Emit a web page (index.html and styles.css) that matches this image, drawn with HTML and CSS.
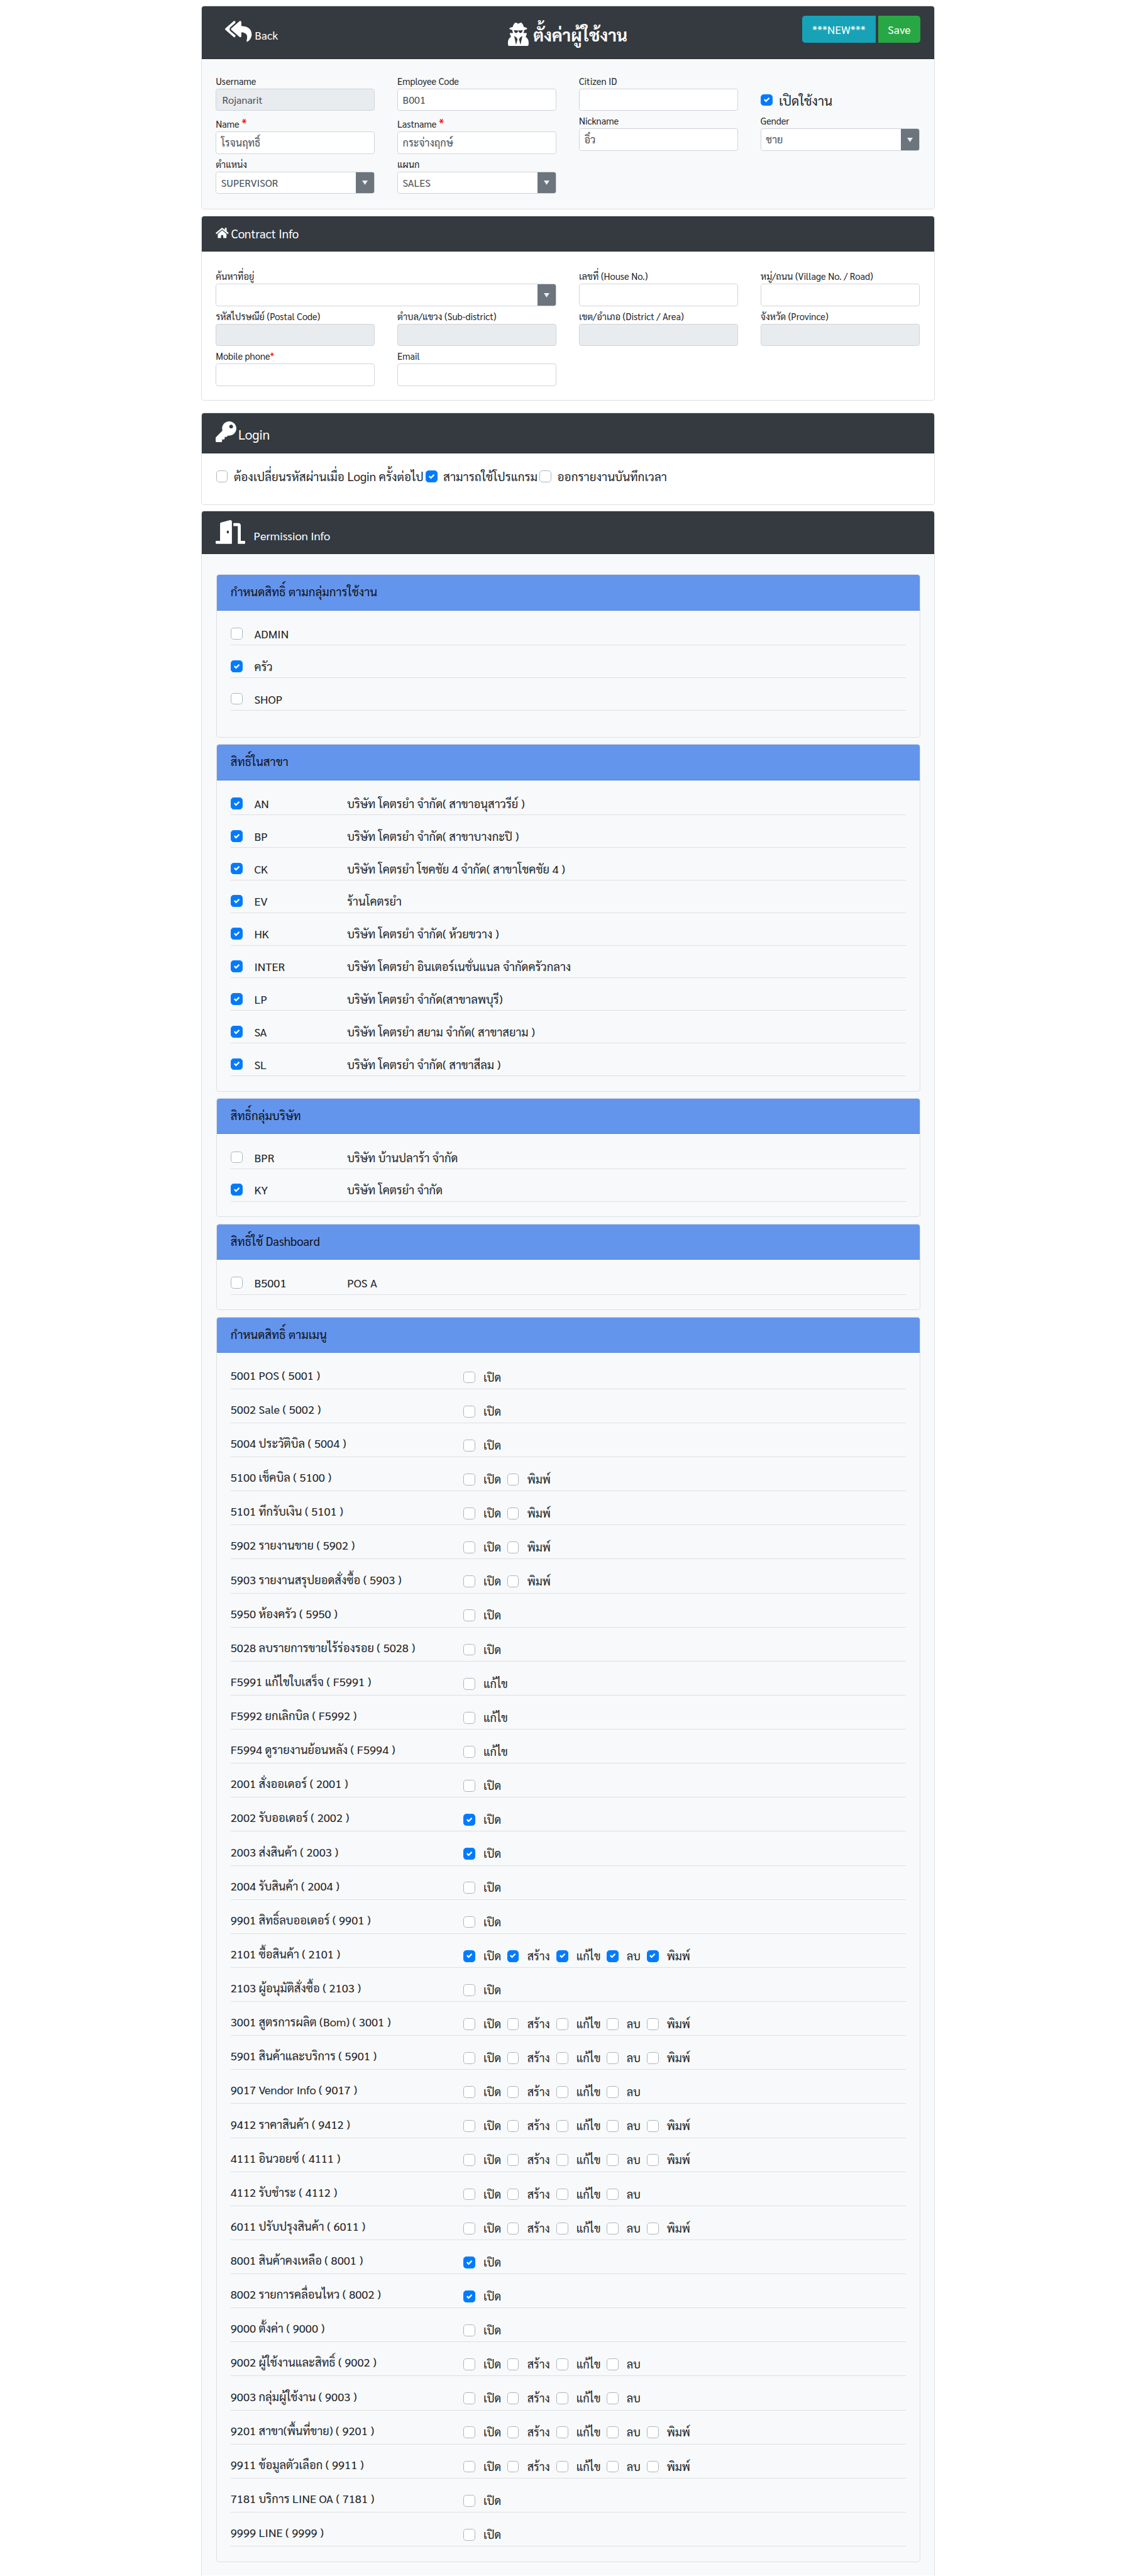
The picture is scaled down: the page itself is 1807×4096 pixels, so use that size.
FILE: index.html
```html
<!DOCTYPE html>
<html lang="th">
<head>
<meta charset="utf-8">
<title>ตั้งค่าผู้ใช้งาน</title>
<link rel="stylesheet" href="styles.css">
</head>
<body>
<main class="page">
  <section class="card card-user">
    <header class="card-head head-user">
      <a class="back"><svg class="i-reply" viewBox="0 0 576 512"><path d="M136.309 189.836L312.313 37.851C327.72 24.546 352 35.348 352 56.015v82.763c129.182 10.231 224 52.212 224 183.548 0 61.441-39.582 122.309-83.333 154.132-13.653 9.931-33.111-2.533-28.077-18.631 38.512-123.162-3.922-169.482-112.59-182.015v84.175c0 20.701-24.3 31.453-39.687 18.164L136.309 226.164c-11.071-9.561-11.086-26.753 0-36.328zm-128 36.328L184.313 378.15C199.7 391.439 224 380.687 224 359.986v-15.818l-108.606-93.785A55.96 55.96 0 0 1 96 207.998a55.953 55.953 0 0 1 19.393-42.38L224 71.832V56.015c0-20.667-24.28-31.469-39.687-18.164L8.309 189.836c-11.086 9.575-11.071 26.767 0 36.328z"/></svg><span>Back</span></a>
      <h1 class="title"><svg class="i-secret" viewBox="0 0 448 512"><path d="M383.9 308.3l23.9-62.6c4-10.5-3.7-21.7-15-21.7h-58.5c11-18.9 17.8-40.6 17.8-64v-.3c39.2-7.8 64-19.1 64-31.7 0-13.3-27.3-25.1-70.1-33-9.2-32.8-27-65.8-40.6-82.8-9.5-11.9-25.9-15.6-39.5-8.8l-27.6 13.8c-9 4.5-19.6 4.5-28.6 0L182.1 3.4c-13.6-6.8-30-3.1-39.5 8.8-13.5 17-31.4 50-40.6 82.8-42.7 7.9-70 19.7-70 33 0 12.6 24.8 23.9 64 31.7v.3c0 23.4 6.8 45.1 17.8 64H56.3c-11.5 0-19.2 11.7-14.7 22.3l25.8 60.2C27.3 329.8 0 372.7 0 422.4v44.8C0 491.9 20.1 512 44.8 512h358.4c24.7 0 44.8-20.1 44.8-44.8v-44.8c0-48.4-25.8-90.4-64.1-114.1zM176 480l-41.6-192 49.6 32 24 40-32 120zm96 0l-32-120 24-40 49.6-32L272 480zm41.7-298.5c-3.9 11.9-7 24.6-16.5 33.4-10.1 9.3-48 22.4-64-25-2.8-8.4-15.4-8.4-18.3 0-17 50.2-56 32.4-64 25-9.5-8.8-12.7-21.5-16.5-33.4-.8-2.5-6.3-5.7-6.3-5.8v-10.8c28.3 3.6 61 5.8 96 5.8s67.7-2.1 96-5.8v10.8c-.1.1-5.6 3.2-6.4 5.8z"/></svg><span>ตั้งค่าผู้ใช้งาน</span></h1>
      <div class="buttons"><button class="btn btn-new"><span>***NEW***</span></button><button class="btn btn-save"><span>Save</span></button></div>
    </header>
    <div class="form">
      <div class="field"><label>Username</label><div class="input off pad">Rojanarit</div></div>
      <div class="field"><label>Employee Code</label><div class="input">B001</div></div>
      <div class="field"><label>Citizen ID</label><div class="input"></div></div>
      <div class="active"><i class="cb on"></i><span>เปิดใช้งาน</span></div>
      <div class="field"><label class="req">Name <b>*</b></label><div class="input">โรจนฤทธิ์</div></div>
      <div class="field"><label class="req">Lastname <b>*</b></label><div class="input">กระจ่างฤกษ์</div></div>
      <div class="field"><label>Nickname</label><div class="input">อิ๋ว</div></div>
      <div class="field"><label>Gender</label><div class="input select">ชาย</div></div>
      <div class="field"><label>ตำแหน่ง</label><div class="input select">SUPERVISOR</div></div>
      <div class="field"><label>แผนก</label><div class="input select">SALES</div></div>
    </div>
  </section>

  <section class="card card-contract">
    <header class="card-head head-contract"><svg class="i-home" viewBox="0 0 576 512"><path d="M280.37 148.26L96 300.11V464a16 16 0 0 0 16 16l112.06-.29a16 16 0 0 0 15.92-16V368a16 16 0 0 1 16-16h64a16 16 0 0 1 16 16v95.64a16 16 0 0 0 16 16.05L464 480a16 16 0 0 0 16-16V300L295.67 148.26a12.19 12.19 0 0 0-15.3 0zM571.6 251.47L488 182.56V44.05a12 12 0 0 0-12-12h-56a12 12 0 0 0-12 12v72.61L318.47 43a48 48 0 0 0-61 0L4.34 251.47a12 12 0 0 0-1.6 16.9l25.5 31A12 12 0 0 0 45.15 301l235.22-193.74a12.19 12.19 0 0 1 15.3 0L530.9 301a12 12 0 0 0 16.9-1.6l25.5-31a12 12 0 0 0-1.7-16.93z"/></svg><span>Contract Info</span></header>
    <div class="form form-contract">
      <div class="field wide"><label>ค้นหาที่อยู่</label><div class="input select"></div></div>
      <div class="field"><label>เลขที่ (House No.)</label><div class="input"></div></div>
      <div class="field"><label>หมู่/ถนน (Village No. / Road)</label><div class="input"></div></div>
      <div class="field"><label>รหัสไปรษณีย์ (Postal Code)</label><div class="input off"></div></div>
      <div class="field"><label>ตำบล/แขวง (Sub-district)</label><div class="input off"></div></div>
      <div class="field"><label>เขต/อำเภอ (District / Area)</label><div class="input off"></div></div>
      <div class="field"><label>จังหวัด (Province)</label><div class="input off"></div></div>
      <div class="field"><label>Mobile phone<b>*</b></label><div class="input"></div></div>
      <div class="field"><label>Email</label><div class="input"></div></div>
    </div>
  </section>

  <section class="card card-login">
    <header class="card-head head-login"><svg class="i-key" viewBox="0 0 512 512"><path d="M512 176.001C512 273.203 433.202 352 336 352c-11.22 0-22.19-1.062-32.827-3.069l-24.012 27.014A23.999 23.999 0 0 1 261.223 384H224v40c0 13.255-10.745 24-24 24h-40v40c0 13.255-10.745 24-24 24H24c-13.255 0-24-10.745-24-24v-78.059c0-6.365 2.529-12.47 7.029-16.971l161.802-161.802C163.108 213.814 160 195.271 160 176 160 78.798 238.797.001 335.999 0 433.488-.001 512 78.511 512 176.001zM336 128c0 26.51 21.49 48 48 48s48-21.49 48-48-21.49-48-48-48-48 21.49-48 48z"/></svg><span>Login</span></header>
    <div class="checks">
      <i class="cb"></i><span class="c1">ต้องเปลี่ยนรหัสผ่านเมื่อ Login ครั้งต่อไป</span>
      <i class="cb on"></i><span class="c2">สามารถใช้โปรแกรม</span>
      <i class="cb"></i><span class="c3">ออกรายงานบันทึกเวลา</span>
    </div>
  </section>

  <section class="card card-perm">
    <header class="card-head head-perm"><svg class="i-door" viewBox="0 0 640 512"><path d="M624 448h-80V113.45C544 86.19 522.47 64 496 64H384v64h96v384h144c8.84 0 16-7.16 16-16v-32c0-8.84-7.16-16-16-16zM312.24 1.01l-192 49.74C105.99 54.44 96 67.7 96 82.92V448H16c-8.84 0-16 7.16-16 16v32c0 8.84 7.16 16 16 16h336V33.18c0-21.58-19.56-37.41-39.76-32.17zM264 288c-13.25 0-24-14.33-24-32s10.75-32 24-32 24 14.33 24 32-10.75 32-24 32z"/></svg><span>Permission Info</span></header>
    <div class="groups">
      <section class="group g-role"><h2>กำหนดสิทธิ์ ตามกลุ่มการใช้งาน</h2><div class="rows" data-list="roles"></div></section>
      <section class="group"><h2>สิทธิ์ในสาขา</h2><div class="rows" data-list="branches"></div></section>
      <section class="group"><h2>สิทธิ์กลุ่มบริษัท</h2><div class="rows" data-list="companies"></div></section>
      <section class="group"><h2>สิทธิ์ใช้ Dashboard</h2><div class="rows" data-list="dashboards"></div></section>
      <section class="group"><h2>กำหนดสิทธิ์ ตามเมนู</h2><div class="rows menu-rows" data-list="menus"></div></section>
    </div>
  </section>
</main>
<script src="script.js"></script>
</body>
</html>
```
FILE: styles.css
```css
/* 1rem = 9.41px, every length is in tenths of it */
* { box-sizing: border-box; }
html { background: #fff; font-size: 9.41px; }
body {
  margin: 0;
  font-family: "Sarabun", "Noto Sans Thai", "Noto Sans", sans-serif;
  font-size: 1.95rem;
  color: #212529;
}
.page { width: 124.1rem; height: 435.2rem; margin: 0 auto; padding-top: 1rem; display: flex; flex-direction: column; }
.card { flex: none; border: 1px solid #dcdfe1; border-radius: .5rem; background: #fff; overflow: hidden; }
.card-head { background: #343a40; color: #fff; border-bottom: 1px solid #2b2f34; display: flex; padding-left: 2.4rem; }
.card-head svg, .title svg { fill: #fff; display: block; flex: none; }
.card-user { height: 34.4rem; background: #f8f9fa; }
.card-contract { height: 31.3rem; margin-top: 1rem; }
.card-login { height: 15.6rem; margin-top: 2rem; }
.card-perm { flex: 1 1 0; min-height: 0; margin-top: 1rem; background: #f8f9fa; border-bottom: 0; border-radius: .5rem .5rem 0 0; }

.head-user { height: 8.9rem; padding: 1.5rem 2.4rem 0 4rem; justify-content: space-between; }
.back { display: flex; gap: .5rem; width: 26.6rem; line-height: 3rem; padding-top: .7rem; }
.back span { margin-top: 1.2rem; font-size: 1.9rem; }
.i-reply { width: 4.5rem; height: 4rem; }
.title { margin: 0; display: flex; gap: .7rem; font-size: 2.84rem; line-height: 4rem; font-weight: 700; padding-top: 1.2rem; }
.i-secret { width: 3.7rem; height: 4rem; }
.buttons { display: flex; gap: .4rem; width: 28.4rem; justify-content: flex-end; }
.btn { height: 4.6rem; border: 0; padding: 0; color: #fff; font: inherit; font-size: 1.9rem; line-height: 4.6rem; }
.btn-new { width: 12.5rem; background: #17a2b8; border-radius: .5rem 0 0 .5rem; }
.btn-save { width: 7.1rem; background: #28a745; border-radius: 0 .5rem .5rem 0; }

.form { display: grid; grid-template-columns: repeat(4, 26.9rem); column-gap: 3.8rem; row-gap: .75rem; padding: 2.7rem 2.4rem 0; align-items: start; }
.form-contract { padding-top: 3.2rem; }
.field { display: flex; flex-direction: column; }
.wide { grid-column: span 2; }
.field label { height: 2.25rem; line-height: 2rem; font-size: 1.56rem; white-space: nowrap; }
.field label b { color: #f00; font-weight: 400; }
.field label.req { height: 2.8rem; line-height: 2.9rem; }
.req b { font-size: 2rem; line-height: 1; }
.input { height: 3.75rem; border: 1px solid #ced4da; border-radius: .4rem; background: #fff; color: #495057; font-size: 1.73rem; line-height: 3.6rem; padding-left: .8rem; white-space: nowrap; }
.off { background: #e9ecef; }
.pad { padding-left: 1rem; }
.select { display: flex; justify-content: space-between; overflow: hidden; }
.select::after {
  content: "";
  margin-left: auto;
  width: 3.1rem;
  background: #6c757d url("data:image/svg+xml,%3Csvg xmlns='http://www.w3.org/2000/svg' viewBox='0 0 10 7'%3E%3Cpath fill='%23eee' d='M0 0h10L5 7z'/%3E%3C/svg%3E") center / 1rem .7rem no-repeat;
}
.active { display: flex; gap: 1.1rem; padding-top: 3.2rem; font-size: 2.2rem; line-height: 2.2rem; }

.cb { display: block; flex: none; width: 2rem; height: 2rem; border: 1px solid #adb5bd; border-radius: .5rem; background: #fff; }
.cb.on { border-color: #007bff; background: #007bff; }
.cb svg { display: block; width: 1rem; height: 1rem; margin: .4rem; }

.head-contract { height: 6rem; gap: .4rem; line-height: 5.8rem; font-size: 2rem; }
.i-home { width: 2.2rem; height: 2rem; margin-top: 1.9rem; }
.head-login { height: 6.8rem; gap: .3rem; line-height: 7.3rem; font-size: 2.2rem; }
.i-key { width: 3.5rem; height: 3.5rem; margin-top: 1.4rem; }
.head-perm { height: 7.2rem; gap: 1.4rem; line-height: 8.2rem; }
.i-door { width: 5rem; height: 4rem; margin-top: 1.5rem; }
.checks { display: flex; padding: 2.9rem 0 0 2.45rem; font-size: 2rem; line-height: 2rem; white-space: nowrap; }
.checks span { margin-left: 1rem; }
.c1 { width: 32.4rem; }
.c2 { width: 16.3rem; }

.groups { padding: 3.45rem 2.4rem 0 2.45rem; display: flex; flex-direction: column; gap: 1.1rem; }
.group { border: 1px solid #dcdfe1; border-radius: .5rem; overflow: hidden; }
.group h2 { margin: 0; height: 6rem; background: #6495ed; border-bottom: 1px solid #5080d8; color: #111; font-size: 1.98rem; font-weight: 400; line-height: 5.6rem; padding-left: 2.35rem; }
.rows { padding: .4rem 2.3rem 2.5rem 2.35rem; }
.g-role .rows { padding-bottom: 4.45rem; }
.row { height: 5.51rem; border-bottom: 1px solid #dcdfe1; display: flex; padding-top: 2.5rem; line-height: 2rem; white-space: nowrap; }
.code { width: 15.7rem; margin-left: 2rem; }
.menu-rows .row { height: 5.753rem; padding-top: 2.35rem; }
.name { width: 39.35rem; }
.option { display: flex; padding-top: .4rem; font-size: 1.92rem; }
.option span { margin-left: 1.4rem; }
.o0 { width: 7.4rem; }
.o1 { width: 8.3rem; }
.o2 { width: 8.5rem; }
.o3 { width: 6.8rem; }
```
FILE: script.js
```js
const lists = {
  roles: [["ADMIN", "", 0], ["ครัว", "", 1], ["SHOP", "", 0]],
  branches: [
    ["AN", "บริษัท โคตรยำ จำกัด( สาขาอนุสาวรีย์ )", 1],
    ["BP", "บริษัท โคตรยำ จำกัด( สาขาบางกะปิ )", 1],
    ["CK", "บริษัท โคตรยำ โชคชัย 4 จำกัด( สาขาโชคชัย 4 )", 1],
    ["EV", "ร้านโคตรยำ", 1],
    ["HK", "บริษัท โคตรยำ จำกัด( ห้วยขวาง )", 1],
    ["INTER", "บริษัท โคตรยำ อินเตอร์เนชั่นแนล จำกัดครัวกลาง", 1],
    ["LP", "บริษัท โคตรยำ จำกัด(สาขาลพบุรี)", 1],
    ["SA", "บริษัท โคตรยำ สยาม จำกัด( สาขาสยาม )", 1],
    ["SL", "บริษัท โคตรยำ จำกัด( สาขาสีลม )", 1]
  ],
  companies: [["BPR", "บริษัท บ้านปลาร้า จำกัด", 0], ["KY", "บริษัท โคตรยำ จำกัด", 1]],
  dashboards: [["B5001", "POS A", 0]]
};
const optionNames = ["เปิด", "สร้าง", "แก้ไข", "ลบ", "พิมพ์"];
// [code, name, option indexes, checked]
const menus = [
  ["5001", "POS", "0"], ["5002", "Sale", "0"], ["5004", "ประวัติบิล", "0"],
  ["5100", "เช็คบิล", "04"], ["5101", "ทึกรับเงิน", "04"], ["5902", "รายงานขาย", "04"],
  ["5903", "รายงานสรุปยอดสั่งซื้อ", "04"], ["5950", "ห้องครัว", "0"],
  ["5028", "ลบรายการขายไร้ร่องรอย", "0"], ["F5991", "แก้ไขใบเสร็จ", "2"],
  ["F5992", "ยกเลิกบิล", "2"], ["F5994", "ดูรายงานย้อนหลัง", "2"],
  ["2001", "สั่งออเดอร์", "0"], ["2002", "รับออเดอร์", "0", 1], ["2003", "ส่งสินค้า", "0", 1],
  ["2004", "รับสินค้า", "0"], ["9901", "สิทธิ์ลบออเดอร์", "0"],
  ["2101", "ซื้อสินค้า", "01234", 1], ["2103", "ผู้อนุมัติสั่งซื้อ", "0"],
  ["3001", "สูตรการผลิต (Bom)", "01234"], ["5901", "สินค้าและบริการ", "01234"],
  ["9017", "Vendor Info", "0123"], ["9412", "ราคาสินค้า", "01234"],
  ["4111", "อินวอยซ์", "01234"], ["4112", "รับชำระ", "0123"],
  ["6011", "ปรับปรุงสินค้า", "01234"], ["8001", "สินค้าคงเหลือ", "0", 1],
  ["8002", "รายการคลื่อนไหว", "0", 1], ["9000", "ตั้งค่า", "0"],
  ["9002", "ผู้ใช้งานและสิทธิ์", "0123"], ["9003", "กลุ่มผู้ใช้งาน", "0123"],
  ["9201", "สาขา(พื้นที่ขาย)", "01234"], ["9911", "ข้อมูลตัวเลือก", "01234"],
  ["7181", "บริการ LINE OA", "0"], ["9999", "LINE", "0"]
];
const box = on => `<i class="cb${on ? " on" : ""}"></i>`;
for (const [key, rows] of Object.entries(lists)) {
  document.querySelector(`[data-list=${key}]`).innerHTML = rows.map(([code, name, on]) =>
    `<div class="row">${box(on)}<span class="code">${code}</span><span>${name}</span></div>`).join("");
}
document.querySelector("[data-list=menus]").innerHTML = menus.map(([code, name, opts, on]) =>
  `<div class="row"><span class="name">${code} ${name} ( ${code} )</span>` +
  [...opts].map(o => `<div class="option o${o}">${box(on)}<span>${optionNames[o]}</span></div>`).join("") +
  `</div>`).join("");
document.querySelectorAll(".cb.on").forEach(el => {
  el.innerHTML = '<svg viewBox="0 0 8 8"><path fill="#fff" d="M6.564.75l-3.59 3.612-1.538-1.55L0 4.26l2.974 2.99L8 2.193z"/></svg>';
});
```
